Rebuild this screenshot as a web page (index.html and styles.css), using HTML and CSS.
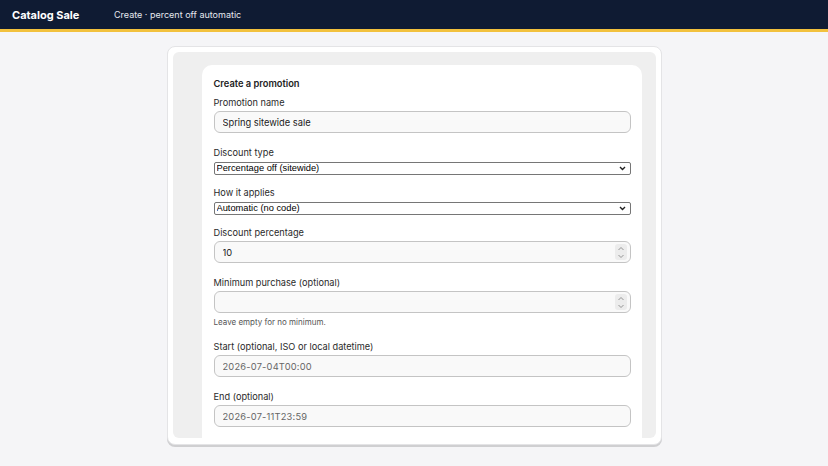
FILE: index.html
```html
<!DOCTYPE html>
<html lang="en">
<head>
    <meta charset="UTF-8">
    <title>Catalog Sale</title>
    <link rel="stylesheet" href="styles.css">
</head>
<body>
    <header class="topbar">
        <span class="topbar__brand">Catalog Sale</span>
        <span class="topbar__crumb">Create · percent off automatic</span>
    </header>

    <main class="page">
        <div class="frame">
            <div class="frame__panel">
                <form class="promo">
                    <div class="promo__title">Create a promotion</div>

                    <label class="field">
                        <span class="field__label">Promotion name</span>
                        <span class="input"><input type="text" value="Spring sitewide sale"></span>
                    </label>

                    <label class="field field--select">
                        <span class="field__label">Discount type</span>
                        <select class="select">
                            <option>Percentage off (sitewide)</option>
                        </select>
                    </label>

                    <label class="field field--select">
                        <span class="field__label">How it applies</span>
                        <select class="select">
                            <option>Automatic (no code)</option>
                        </select>
                    </label>

                    <label class="field">
                        <span class="field__label">Discount percentage</span>
                        <span class="input">
                            <input type="text" value="10">
                            <span class="spin">
                                <svg width="8" height="5" viewBox="0 0 8 5"><path d="M1.5 4L4 1.5L6.5 4" fill="none" stroke="#8a8a8a" stroke-width="0.9"/></svg>
                                <svg width="8" height="5" viewBox="0 0 8 5"><path d="M1.5 1L4 3.5L6.5 1" fill="none" stroke="#8a8a8a" stroke-width="0.9"/></svg>
                            </span>
                        </span>
                    </label>

                    <label class="field">
                        <span class="field__label">Minimum purchase (optional)</span>
                        <span class="input">
                            <input type="text" value="">
                            <span class="spin">
                                <svg width="8" height="5" viewBox="0 0 8 5"><path d="M1.5 4L4 1.5L6.5 4" fill="none" stroke="#8a8a8a" stroke-width="0.9"/></svg>
                                <svg width="8" height="5" viewBox="0 0 8 5"><path d="M1.5 1L4 3.5L6.5 1" fill="none" stroke="#8a8a8a" stroke-width="0.9"/></svg>
                            </span>
                        </span>
                        <span class="field__help">Leave empty for no minimum.</span>
                    </label>

                    <label class="field">
                        <span class="field__label">Start (optional, ISO or local datetime)</span>
                        <span class="input input--muted"><input type="text" value="2026-07-04T00:00"></span>
                    </label>

                    <label class="field">
                        <span class="field__label">End (optional)</span>
                        <span class="input input--muted"><input type="text" value="2026-07-11T23:59"></span>
                    </label>
                </form>
            </div>
        </div>
    </main>
</body>
</html>
```

FILE: styles.css
```css
html {
    height: 100%;
}

body {
    margin: 0;
    min-height: 100%;
    background: #f5f5f7;
    font-family: Inter, "Noto Sans", sans-serif;
    color: #222;
}

.topbar {
    display: flex;
    align-items: center;
    height: 29px;
    padding: 0 12px;
    background: #0f1b33;
    border-bottom: 3px solid #f2c13d;
    color: #fff;
}

.topbar__brand {
    font-weight: 700;
    font-size: 11px;
    width: 102px;
}

.topbar__crumb {
    font-size: 9px;
    color: #e6e8ee;
}

.page {
    display: flex;
    justify-content: center;
    padding-top: 14px;
}

.frame {
    width: 483px;
    height: 386px;
    padding: 5px 5px 6px 5px;
    background: #fff;
    border: 1px solid #e4e4e6;
    border-radius: 8px;
    box-shadow: 0 2px 0 #cfcfd1;
}

.frame__panel {
    height: 100%;
    overflow: hidden;
    background: #efefef;
    border-radius: 6px;
    padding: 13px 14px 0 29px;
    box-sizing: border-box;
}

.promo {
    display: flex;
    flex-direction: column;
    gap: 11px;
    background: #fff;
    border-radius: 10px;
    padding: 12px 11px 40px 12px;
    margin: 0;
}

.promo__title {
    font-size: 9.3px;
    font-weight: 600;
    line-height: 14px;
    margin-bottom: -6px;
}

.field {
    display: flex;
    flex-direction: column;
    gap: 3px;
}

.field--select {
    gap: 2px;
}

.field__label {
    font-size: 9.2px;
    line-height: 14px;
    color: #2a2a2a;
}

.field__help {
    font-size: 8px;
    line-height: 10px;
    color: #555;
    margin: -1px 0 2px;
}

.input {
    display: flex;
    align-items: center;
    height: 22px;
    box-sizing: border-box;
    margin: -2px 0 2px;
    padding: 0 3px 0 8px;
    border: 1px solid #c4c4c4;
    border-radius: 6px;
    background: #f9f9f9;
}

.input input {
    flex: 1;
    min-width: 0;
    border: 0;
    padding: 0;
    background: transparent;
    font-family: Inter, "Noto Sans", sans-serif;
    font-size: 9.3px;
    color: #1a1a1a;
    outline: none;
}

.input--muted input {
    color: #666;
    letter-spacing: 0.2px;
}

.spin {
    display: flex;
    flex-direction: column;
    align-items: center;
    justify-content: center;
    gap: 3px;
    width: 12px;
    height: 16px;
    border-radius: 3px;
    background: #ececec;
}

.select {
    -webkit-appearance: none;
    appearance: none;
    height: 13px;
    padding: 0 0 0 2px;
    border: 1px solid #767676;
    border-radius: 2px;
    background: #fff url("data:image/svg+xml;utf8,<svg xmlns='http://www.w3.org/2000/svg' width='7' height='5' viewBox='0 0 7 5'><path d='M1 1L3.5 3.5L6 1' fill='none' stroke='%23222' stroke-width='1.4'/></svg>") no-repeat right 4px center;
    font-family: "Liberation Sans", Arial, sans-serif;
    font-size: 9.3px;
    line-height: 11px;
    color: #000;
}
```
